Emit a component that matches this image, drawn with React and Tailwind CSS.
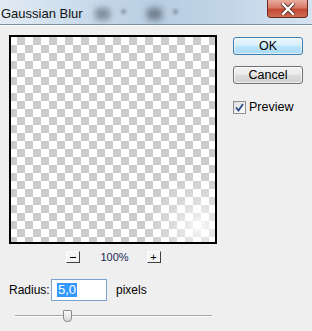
import React from "react";

const font = { fontFamily: '"Liberation Sans", Arial, sans-serif' };

function SmallBtn({ children }) {
  return (
    <div className="w-[14px] h-[12px] bg-[#f4f4f4] border-t border-l border-[#ffffff] border-r-[1.5px] border-b-[1.5px] border-r-[#404040] border-b-[#404040] flex items-center justify-center text-[11px] leading-none text-black">
      {children}
    </div>
  );
}

export default function App() {
  return (
    <div
      className="w-[312px] h-[331px] bg-[#efefef] flex flex-col overflow-hidden text-[12px] text-black"
      style={font}
    >
      {/* Title bar */}
      <div className="h-[25px] shrink-0 flex items-start border-b border-[#7d8fa6] bg-[linear-gradient(90deg,#e2ebf4_0%,#cbdcec_25%,#b8cde2_50%,#c3d6e9_75%,#d6e4f1_100%)]">
        <div className="pt-[4px] pl-[1px] text-[13px] text-[#111]">Gaussian Blur</div>
        <div className="ml-[12px] mt-[8px] w-[15px] h-[12px] rounded-[2px] bg-[#707b88] blur-[3px] opacity-80" />
        <div className="ml-[11px] mt-[9px] w-[5px] h-[5px] rounded-full bg-[#8793a2] blur-[1.5px]" />
        <div className="ml-[21px] mt-[8px] w-[15px] h-[12px] rounded-[2px] bg-[#5f6a77] blur-[3px] opacity-80" />
        <div className="ml-[11px] mt-[9px] w-[5px] h-[5px] rounded-full bg-[#8793a2] blur-[1.5px]" />
        <div className="ml-auto mr-[4px] w-[41px] h-[18px] rounded-b-[4px] border border-t-0 border-[#6e2a22] bg-[linear-gradient(180deg,#e9ad9f_0%,#d87a66_45%,#c24a33_55%,#cf6b52_100%)] flex items-center justify-center">
          <svg width="14" height="12" viewBox="0 0 14 12">
            <path d="M2 1 L12 11 M12 1 L2 11" stroke="#5a2a24" strokeWidth="4.2" strokeLinecap="square" />
            <path d="M2 1 L12 11 M12 1 L2 11" stroke="#ffffff" strokeWidth="2.4" strokeLinecap="square" />
          </svg>
        </div>
      </div>

      {/* Body */}
      <div className="flex-1 border-t border-white flex pl-[9px] pt-[9px]">
        {/* Left column */}
        <div className="w-[208px] flex flex-col">
          <div className="relative w-[208px] h-[209px] border-2 border-black bg-[conic-gradient(#cccccc_25%,#ffffff_0_50%,#cccccc_0_75%,#ffffff_0)] bg-[length:16px_16px] bg-[position:-2px_0px] overflow-hidden">
            <div className="absolute inset-0 bg-[radial-gradient(circle_at_92%_92%,rgba(255,255,255,0.95)_0px,rgba(255,255,255,0.55)_12px,rgba(255,255,255,0.25)_30px,rgba(255,255,255,0)_55px)]" />
          </div>
          <div className="mt-[7px] flex justify-center items-center gap-[21px]">
            <SmallBtn>
              <span className="block w-[6px] h-[1px] bg-black" />
            </SmallBtn>
            <div className="w-[25px] text-center text-[11px] leading-[12px] text-[#1a2a55]">100%</div>
            <SmallBtn>
              <span className="text-[11px] leading-none">+</span>
            </SmallBtn>
          </div>
          <div className="mt-[16px] flex items-center h-[22px]">
            <div className="w-[42px] text-[12px]">Radius:</div>
            <div className="w-[56px] h-[22px] border border-[#7da2ce] bg-white flex items-center pl-[5px]">
              <span className="bg-[#3399ff] text-white text-[13px] leading-[14px] px-[1px]">5,0</span>
            </div>
            <div className="ml-[9px] text-[12px]">pixels</div>
          </div>
          <div className="relative mt-[9px] ml-[6px] w-[197px] h-[12px]">
            <div className="absolute left-0 right-0 top-[5px] h-[1px] bg-[#a6a6a6]" />
            <div className="absolute left-0 right-0 top-[6px] h-[1px] bg-white" />
            <div className="absolute left-[48px] top-0 w-[9px] h-[12px] rounded-b-[4px] rounded-t-[1px] border border-[#8a8a8a] bg-[linear-gradient(180deg,#fafafa,#d9d9d9)]" />
          </div>
        </div>

        {/* Right column */}
        <div className="ml-[16px] w-[70px] flex flex-col pt-[2px]">
          <div className="h-[18px] rounded-[3px] border border-[#3c7fb1] bg-[linear-gradient(180deg,#eaf6fd_0%,#d9f0fc_45%,#bee6fd_50%,#a7d9f5_100%)] shadow-[inset_0_0_0_1px_rgba(255,255,255,0.6)] flex items-center justify-center text-[12.5px]">
            OK
          </div>
          <div className="mt-[11px] h-[18px] rounded-[3px] border border-[#707070] bg-[linear-gradient(180deg,#f2f2f2_0%,#ebebeb_45%,#dddddd_50%,#cfcfcf_100%)] shadow-[inset_0_0_0_1px_rgba(255,255,255,0.7)] flex items-center justify-center text-[12.5px]">
            Cancel
          </div>
          <div className="mt-[14px] flex items-center">
            <div className="w-[13px] h-[13px] border border-[#8f8f8f] bg-[linear-gradient(135deg,#dcdcdc,#ffffff)] flex items-center justify-center">
              <svg width="9" height="9" viewBox="0 0 9 9">
                <path d="M1 4.5 L3.5 7.5 L8 1" stroke="#2a4a8c" strokeWidth="1.8" fill="none" />
              </svg>
            </div>
            <div className="ml-[3px] text-[12.5px]">Preview</div>
          </div>
        </div>
      </div>
    </div>
  );
}
